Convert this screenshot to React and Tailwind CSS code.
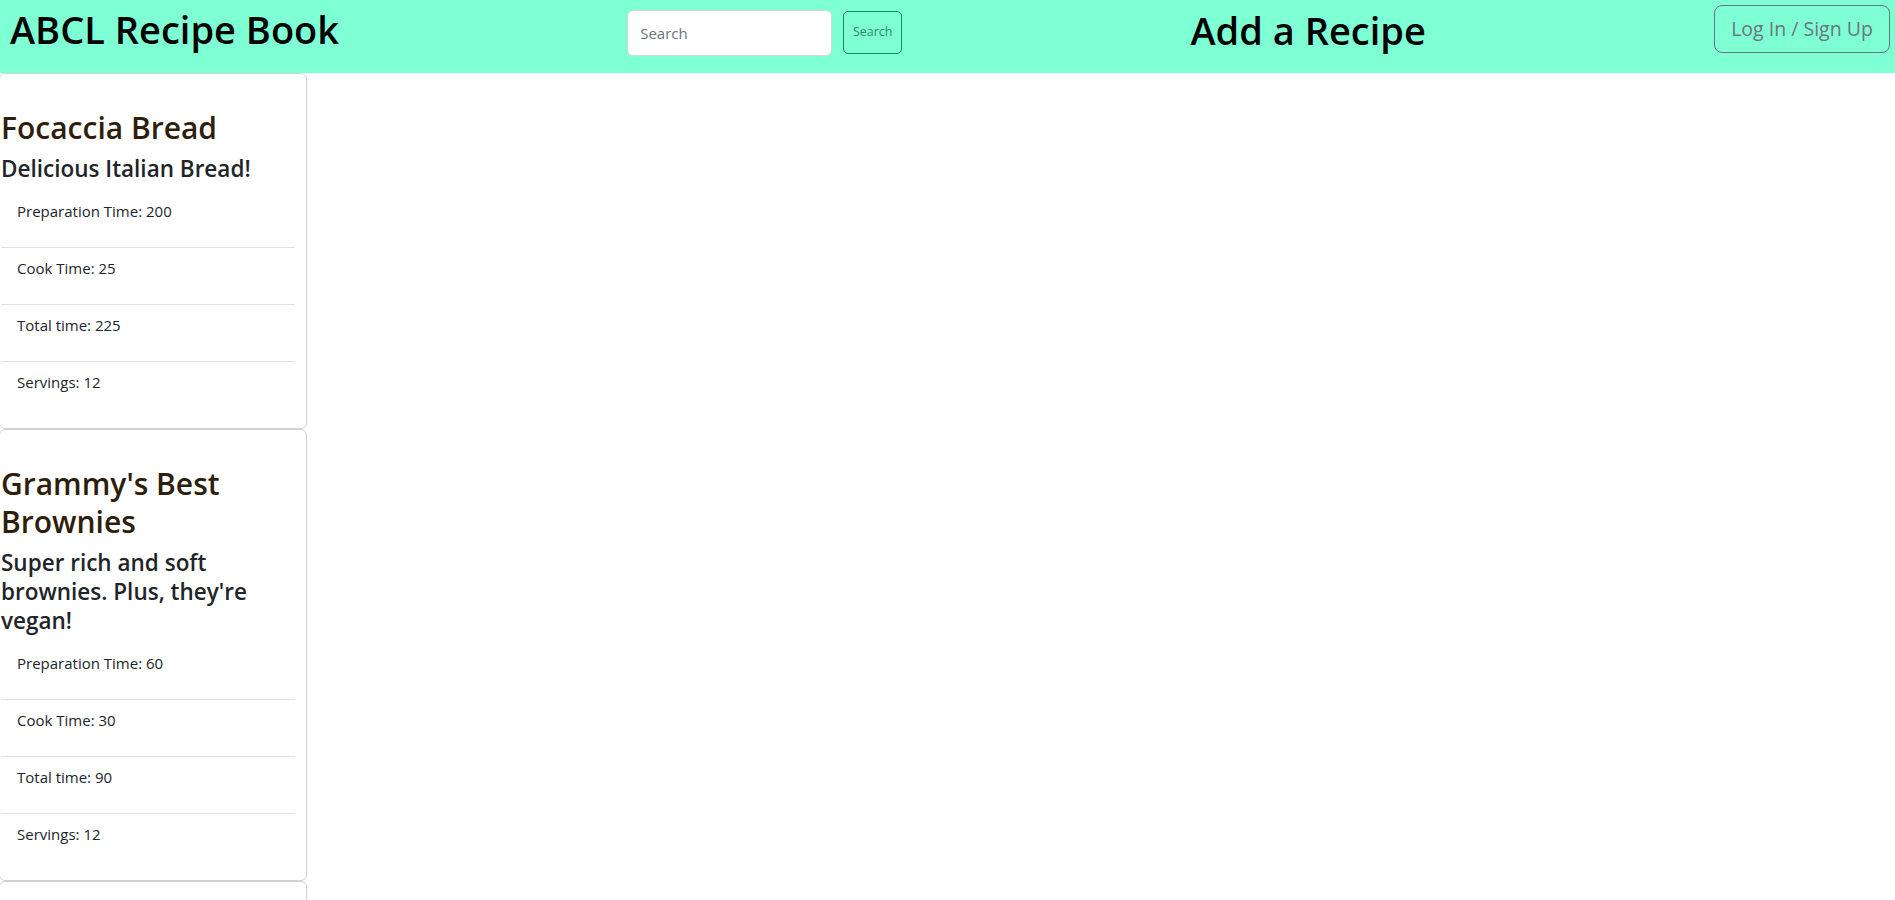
import React from "react";

const recipes = [
  {
    title: "Focaccia Bread",
    desc: "Delicious Italian Bread!",
    prep: 200,
    cook: 25,
    total: 225,
    servings: 12,
  },
  {
    title: "Grammy's Best Brownies",
    desc: "Super rich and soft brownies. Plus, they're vegan!",
    prep: 60,
    cook: 30,
    total: 90,
    servings: 12,
  },
  {
    title: "Chocolate Chip Cookies",
    desc: "Chewy and golden every time!",
    prep: 20,
    cook: 12,
    total: 32,
    servings: 24,
  },
];

function Item({ children, last }) {
  return (
    <li className={"px-4 pt-2 pb-2 " + (last ? "" : "border-b border-[#dee2e6]")}>
      <p className="mb-4 text-[15px] leading-6 text-[#212529]">{children}</p>
    </li>
  );
}

function RecipeCard({ r }) {
  return (
    <div className="-ml-px w-[308px] rounded-md border border-[#d2d2d2] bg-white">
      <div className="pt-[35px] pb-[10px] pl-px pr-[11px]">
        <h2 className="mb-[7px] text-[30px] leading-[38px] font-semibold text-[#2e1e0c]">{r.title}</h2>
        <h4 className="mb-2 text-[22.5px] leading-[29px] font-semibold text-[#212529]">{r.desc}</h4>
        <ul>
          <Item>Preparation Time: {r.prep}</Item>
          <Item>Cook Time: {r.cook}</Item>
          <Item>Total time: {r.total}</Item>
          <Item last>Servings: {r.servings}</Item>
        </ul>
      </div>
    </div>
  );
}

export default function App() {
  return (
    <div className="min-h-[900px] bg-white font-['Open_Sans',sans-serif]">
      <header className="flex h-[73px] items-start justify-between bg-[#7fffd4] pl-[10px] pr-[5px]">
        <h1 className="mt-[5px] text-[38px] leading-[48px] font-semibold text-black">ABCL Recipe Book</h1>
        <form className="mt-[10px] flex items-start gap-[11px]" onSubmit={(e) => e.preventDefault()}>
          <input
            type="text"
            placeholder="Search"
            className="h-[46px] w-[205px] rounded-md border border-[#d6d6d6] bg-white px-3 text-[15px] text-[#212529] placeholder:text-[#6c757d] outline-none"
          />
          <button
            type="submit"
            className="mt-px h-[43px] w-[59px] rounded-[5px] border border-[#198754] text-[12.5px] text-[#2e8b5f]"
          >
            Search
          </button>
        </form>
        <h1 className="mt-[6px] text-[38px] leading-[48px] font-semibold text-black">Add a Recipe</h1>
        <button className="mt-[5px] h-[48px] w-[176px] rounded-lg border border-[#6c757d] text-[19.5px] text-[#6c757d]">
          Log In / Sign Up
        </button>
      </header>
      <main className="flex flex-col">
        {recipes.map((r) => (
          <RecipeCard key={r.title} r={r} />
        ))}
      </main>
    </div>
  );
}
